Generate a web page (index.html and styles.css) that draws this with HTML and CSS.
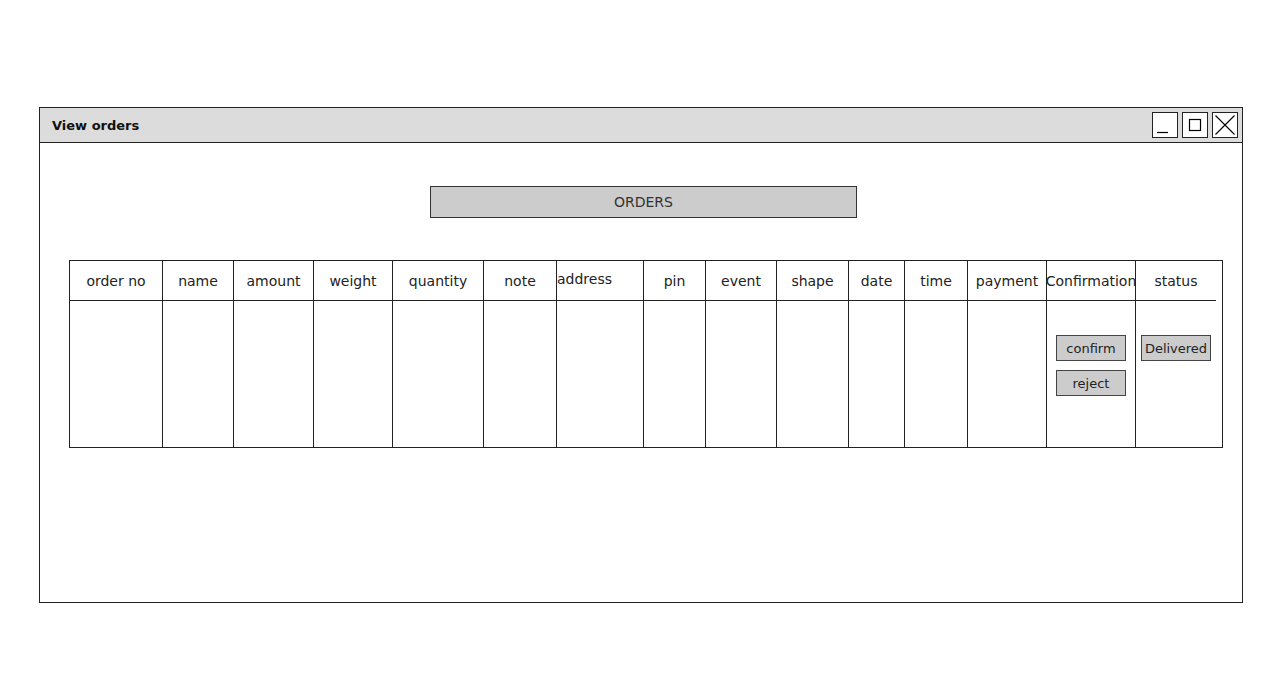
FILE: index.html
```html
<!doctype html>
<html>

<head>
  <title>View orders</title>
  <meta http-equiv="Content-Type" content="text/html; charset=UTF-8">
  <link rel="stylesheet" href="styles.css">
</head>

<body>
  <div class="window">
    <div class="titlebar">
      <span class="title">View orders</span>
      <div class="controls">
        <span class="ctl">
          <svg width="24" height="24" viewBox="0 0 24 24"><line x1="4" y1="19.5" x2="15" y2="19.5" stroke="#000" stroke-width="1.2" /></svg>
        </span>
        <span class="ctl">
          <svg width="24" height="24" viewBox="0 0 24 24"><rect x="6.5" y="6.5" width="11" height="11" fill="none" stroke="#000" stroke-width="1.2" /></svg>
        </span>
        <span class="ctl">
          <svg width="24" height="24" viewBox="0 0 24 24"><path d="M2.5 2.5 L21.5 21.5 M21.5 2.5 L2.5 21.5" stroke="#000" stroke-width="1.1" /></svg>
        </span>
      </div>
    </div>

    <div class="content">
      <div class="heading">ORDERS</div>

      <div class="grid">
        <div class="col w1"><div class="head">order no</div><div class="cell"></div></div>
        <div class="col w2"><div class="head">name</div><div class="cell"></div></div>
        <div class="col w3"><div class="head">amount</div><div class="cell"></div></div>
        <div class="col w4"><div class="head">weight</div><div class="cell"></div></div>
        <div class="col w5"><div class="head">quantity</div><div class="cell"></div></div>
        <div class="col w6"><div class="head">note</div><div class="cell"></div></div>
        <div class="col w7"><div class="head left">address</div><div class="cell"></div></div>
        <div class="col w8"><div class="head">pin</div><div class="cell"></div></div>
        <div class="col w9"><div class="head">event</div><div class="cell"></div></div>
        <div class="col w10"><div class="head">shape</div><div class="cell"></div></div>
        <div class="col w11"><div class="head">date</div><div class="cell"></div></div>
        <div class="col w12"><div class="head">time</div><div class="cell"></div></div>
        <div class="col w13"><div class="head">payment</div><div class="cell"></div></div>
        <div class="col w14">
          <div class="head">Confirmation</div>
          <div class="cell stack">
            <a href="#" class="btn">confirm</a>
            <a href="#" class="btn">reject</a>
          </div>
        </div>
        <div class="col w15">
          <div class="head short">status</div>
          <div class="cell stack status">
            <a href="#" class="btn">Delivered</a>
          </div>
        </div>
      </div>
    </div>
  </div>
</body>

</html>
```

FILE: styles.css
```css
html,
body {
  background-color: white;
  margin: 0;
  font-family: "Comic Sans MS", "DejaVu Sans", sans-serif;
  color: #222;
}

body {
  padding: 107px 0 0 39px;
}

.window {
  width: 1202px;
  height: 494px;
  border: 1px solid #222;
}

.titlebar {
  height: 34px;
  background-color: #dcdcdc;
  border-bottom: 1px solid #222;
  display: flex;
  align-items: center;
  justify-content: space-between;
}

.title {
  font-weight: bold;
  font-size: 13px;
  margin-left: 12px;
  color: #111;
}

.controls {
  display: flex;
  gap: 4px;
  margin-right: 4px;
}

.ctl {
  width: 24px;
  height: 24px;
  border: 1px solid #222;
  background-color: white;
  display: block;
}

.ctl svg {
  display: block;
}

.content {
  padding: 43px 0 0 29px;
}

.heading {
  margin-left: 361px;
  width: 425px;
  height: 30px;
  background-color: #cccccc;
  border: 1px solid #333;
  font-size: 14px;
  color: #333;
  display: flex;
  align-items: center;
  justify-content: center;
}

.grid {
  margin-top: 42px;
  width: 1153px;
  display: flex;
  border-top: 1px solid #222;
  border-bottom: 1px solid #222;
  border-left: 1px solid #222;
}

.col {
  border-right: 1px solid #222;
  box-sizing: border-box;
}

.head {
  height: 39px;
  border-bottom: 1px solid #222;
  font-size: 14px;
  display: flex;
  align-items: center;
  justify-content: center;
  white-space: nowrap;
}

.head.left {
  justify-content: flex-start;
  align-items: flex-start;
  height: 29px;
  padding-top: 10px;
}

.head.short {
  margin-right: 6px;
}

.cell {
  height: 146px;
}

.stack {
  display: flex;
  flex-direction: column;
  align-items: center;
  gap: 9px;
  padding-top: 34px;
  box-sizing: border-box;
}

.status {
  align-items: flex-start;
  padding-left: 5px;
}

.btn {
  width: 70px;
  height: 26px;
  box-sizing: border-box;
  background-color: #cccccc;
  border: 1px solid #444;
  font-size: 13px;
  color: #222;
  text-decoration: none;
  display: flex;
  align-items: center;
  justify-content: center;
  white-space: nowrap;
}

.w1 { width: 93px; }
.w2 { width: 71px; }
.w3 { width: 80px; }
.w4 { width: 79px; }
.w5 { width: 91px; }
.w6 { width: 73px; }
.w7 { width: 87px; }
.w8 { width: 62px; }
.w9 { width: 71px; }
.w10 { width: 72px; }
.w11 { width: 56px; }
.w12 { width: 63px; }
.w13 { width: 79px; }
.w14 { width: 89px; }
.w15 { width: 87px; }
```
